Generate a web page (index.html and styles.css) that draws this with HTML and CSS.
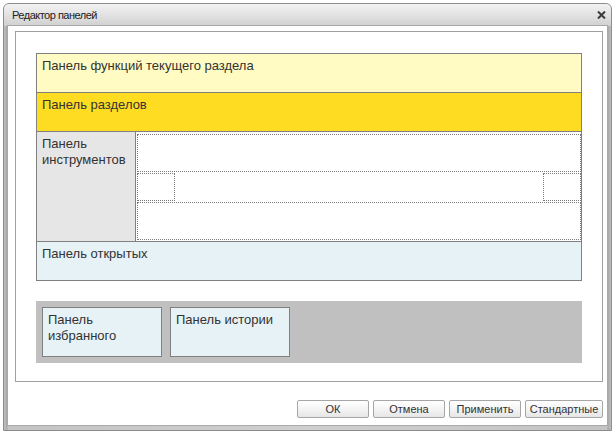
FILE: index.html
```html
<!DOCTYPE html>
<html lang="ru">
<head>
<meta charset="utf-8">
<title>Редактор панелей</title>
<link rel="stylesheet" href="styles.css">
</head>
<body>
<div class="window">
  <div class="titlebar">
    <span class="title">Редактор панелей</span>
    <svg class="close" width="9" height="8" viewBox="0 0 9 8"><path d="M1 0.5 L8 7.5 M8 0.5 L1 7.5" stroke="#3a3a3a" stroke-width="2"/></svg>
  </div>
  <div class="client">
    <div class="frame">
      <div class="layout">
        <div class="row row-func">Панель функций текущего раздела</div>
        <div class="row row-sections">Панель разделов</div>
        <div class="row-tools">
          <div class="tools-label">Панель<br>инструментов</div>
          <div class="tools-area">
            <div class="dot-box dot-wide"></div>
            <div class="dot-middle">
              <div class="dot-box dot-small"></div>
              <div class="dot-box dot-small"></div>
            </div>
            <div class="dot-box dot-wide"></div>
          </div>
        </div>
        <div class="row row-open">Панель открытых</div>
      </div>
      <div class="bottom-area">
        <div class="mini-panel">Панель<br>избранного</div>
        <div class="mini-panel">Панель истории</div>
      </div>
    </div>
    <div class="buttons">
      <button class="btn">ОК</button>
      <button class="btn">Отмена</button>
      <button class="btn">Применить</button>
      <button class="btn btn-wide">Стандартные</button>
    </div>
  </div>
</div>
</body>
</html>
```
FILE: styles.css
```css
html, body {
  margin: 0;
  padding: 0;
  background: #ffffff;
}
body {
  width: 616px;
  height: 432px;
  overflow: hidden;
  font-family: "Liberation Sans", Arial, sans-serif;
}
.window {
  margin: 3px 0 0 3px;
  width: 609px;
  height: 428px;
  box-sizing: border-box;
  border: 1px solid #8c8c8c;
  border-radius: 6px 6px 0 0;
  background: linear-gradient(to right, #c0c0c0, #a8a8a8 3px, #c4c4c4 4px, #cfcfcf 50%, #c4c4c4 calc(100% - 4px), #a8a8a8 calc(100% - 3px), #c0c0c0);
  display: flex;
  flex-direction: column;
}
.titlebar {
  height: 22px;
  flex: none;
  display: flex;
  align-items: center;
  justify-content: space-between;
  padding: 0 5px 0 8px;
  border-radius: 5px 5px 0 0;
  background: linear-gradient(to bottom, #f2f2f2, #e2e2e2 50%, #d0d0d0);
}
.title {
  font-size: 11px;
  color: #222;
  letter-spacing: -0.5px;
}
.close {
  display: block;
  margin-top: -1px;
}
.client {
  flex: 1;
  margin: 0 4px 5px 4px;
  background: #ffffff;
  display: flex;
  flex-direction: column;
  box-shadow: 0 0 0 1px #a8a8a8;
}
.frame {
  margin: 5px 4px 0 7px;
  border: 1px solid #a0a0a0;
  padding: 21px 20px 18px 20px;
  display: flex;
  flex-direction: column;
  gap: 20px;
}
.layout {
  border: 1px solid #808080;
  display: flex;
  flex-direction: column;
}
.row {
  height: 39px;
  padding: 4px 5px 0 5px;
  box-sizing: border-box;
  font-size: 13px;
  line-height: 16px;
  color: #333;
  border-bottom: 1px solid #808080;
}
.row-func { background: #fffbc2; }
.row-sections { background: #fddc22; }
.row-open { background: #e6f2f6; border-bottom: 0; height: 38px; }
.row-tools {
  height: 110px;
  box-sizing: border-box;
  border-bottom: 1px solid #808080;
  display: flex;
}
.tools-label {
  flex: none;
  background: #e6e6e6;
  border-right: 1px solid #808080;
  padding: 4px 0 0 5px;
  width: 93px;
  font-size: 13px;
  line-height: 16px;
  color: #333;
}
.tools-area {
  flex: 1;
  padding: 2px 0 1px 1px;
  display: flex;
  flex-direction: column;
}
.dot-box {
  border: 1px dotted #7a7a7a;
  box-sizing: border-box;
}
.dot-wide { height: 38px; }
.dot-middle {
  height: 30px;
  display: flex;
  justify-content: space-between;
  align-items: center;
}
.dot-small {
  width: 38px;
  height: 28px;
}
.bottom-area {
  height: 62px;
  box-sizing: border-box;
  background: #c0c0c0;
  padding: 6px;
  display: flex;
  gap: 8px;
}
.mini-panel {
  width: 120px;
  height: 50px;
  box-sizing: border-box;
  border: 1px solid #808080;
  background: #e6f2f6;
  padding: 4px 5px 0 5px;
  font-size: 13px;
  line-height: 16px;
  color: #333;
}
.buttons {
  margin: 18px 4px 0 0;
  display: flex;
  justify-content: flex-end;
  gap: 4px;
}
.btn {
  width: 72px;
  height: 18px;
  padding: 0;
  margin: 0;
  border: 1px solid #a6a6a6;
  border-radius: 2px;
  background: linear-gradient(to bottom, #ffffff, #f4f4f4 50%, #e6e6e6);
  font-family: "Liberation Sans", Arial, sans-serif;
  font-size: 11px;
  color: #333;
  line-height: 16px;
}
.btn-wide { width: 78px; }
```
